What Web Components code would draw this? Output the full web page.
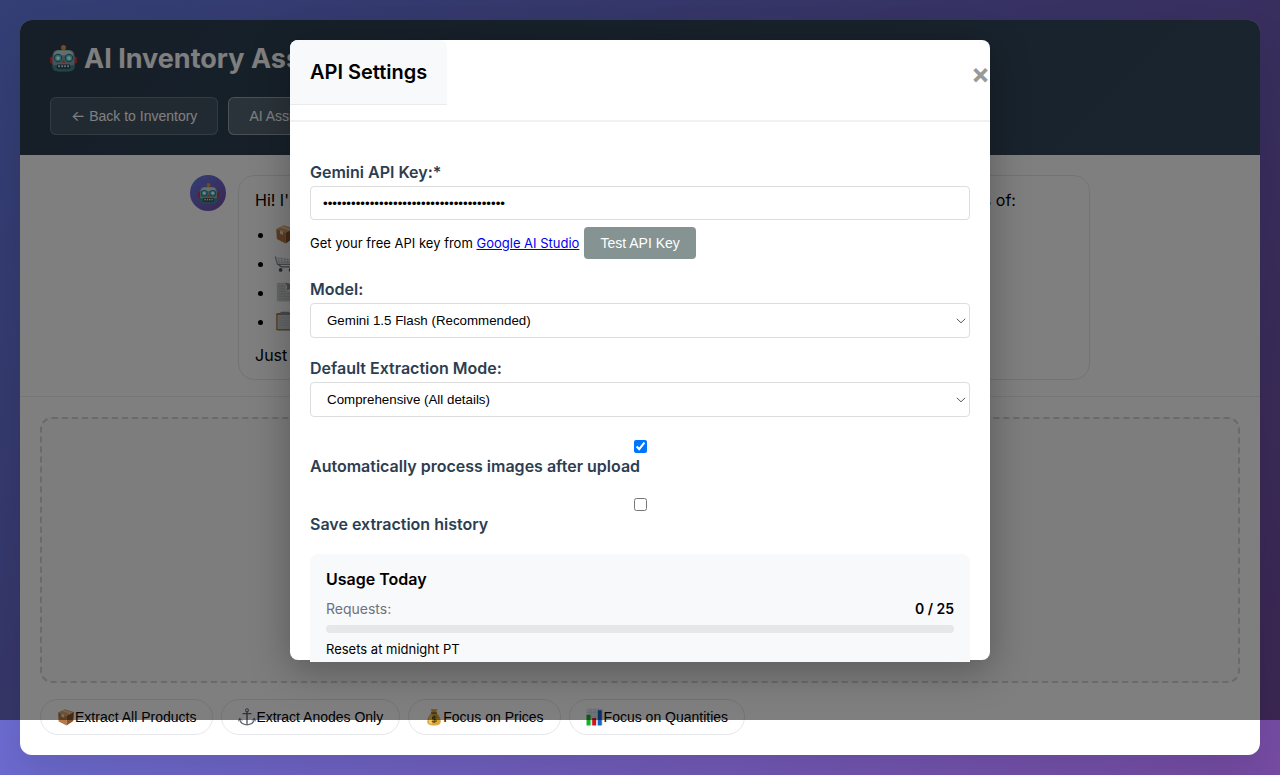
<!DOCTYPE html>
<html lang="en">
<head>
<meta charset="utf-8">
<meta name="viewport" content="width=device-width, initial-scale=1">
<title>AI Inventory Assistant</title>
<style>
  * { box-sizing: border-box; }
  body {
    margin: 0;
    font-family: Inter, "Liberation Sans", sans-serif;
    font-size: 16px;
    line-height: 24px;
    color: #000;
  }
</style>
</head>
<body>
<inventory-app></inventory-app>

<script>
const ICONS = {
  robot: `
    <rect x="0" y="14" width="4" height="8" rx="1.5" fill="#c23d3a"/>
    <rect x="28" y="14" width="4" height="8" rx="1.5" fill="#c23d3a"/>
    <rect x="14" y="4" width="4" height="4" fill="#8e6a8c"/>
    <circle cx="16" cy="3" r="3" fill="#e09c2c"/>
    <path d="M10 6h12c5 0 7 3 7 8v11c0 4-2 6-6 6H9c-4 0-6-2-6-6V14c0-5 2-8 7-8z" fill="#8aa9ae"/>
    <path d="M11 6.500h10c4 0 6 2 6.500 5.500h-23c.5-3.500 2.500-5.500 6.500-5.500z" fill="#c6dcdc"/>
    <path d="M3 23v2c0 4 2 6 6 6h14c4 0 6-2 6-6v-2c-3 2-23 2-26 0z" fill="#3e8890"/>
    <circle cx="9.500" cy="15.500" r="5" fill="#1d7488"/><circle cx="22.500" cy="15.500" r="5" fill="#1d7488"/>
    <circle cx="9.500" cy="15.500" r="3.800" fill="#4fcde0"/><circle cx="22.500" cy="15.500" r="3.800" fill="#4fcde0"/>
    <circle cx="9.500" cy="15.500" r="2.200" fill="#fff"/><circle cx="22.500" cy="15.500" r="2.200" fill="#fff"/>
    <path d="M16 17l2.500 4h-5z" fill="#e2503f"/>
    <rect x="8" y="23" width="16" height="5" rx="1.5" fill="#243f4a"/>
    <path d="M9.500 24H12v2.500H9.500zM13.300 24h2.300v2.500h-2.300zM16.700 24H19v2.500h-2.300zM20.200 24h2.300v2.500h-2.300z" fill="#cfdcdb"/>`,
  box: `
    <path d="M2 8L14 2l16 5-13 7z" fill="#d9a066"/>
    <path d="M2 8l15 6v17L3 24z" fill="#b87a42"/>
    <path d="M17 14l13-7-1 16-12 8z" fill="#8a5528"/>
    <path d="M8 5l4-2 15 5.500-4 2.200z" fill="#edcda0"/>
    <path d="M8 10.400l5 2v5l-5-2z" fill="#f3e3c8"/>`,
  cart: `
    <path d="M0 5l4 13h20l5-6h3" fill="none" stroke="#8d9297" stroke-width="2"/>
    <path d="M1 8l26 3M2 12l24 2M3 15h22M5 7l3 11M10 7l2 11M15 8l1 10M20 9v9M25 10l-1 8" stroke="#c4c8cb" stroke-width="1.500"/>
    <path d="M5 18l5 4h18" fill="none" stroke="#777c81" stroke-width="2"/>
    <circle cx="9" cy="27" r="3" fill="#555"/><circle cx="25" cy="27" r="3" fill="#555"/>`,
  page: `
    <path d="M3 1h14l2 12 12 3v15H3z" fill="#cfd1d3"/>
    <path d="M16 1c8 0 14 5 15 14-4-3-8-4-12-2 1-4 0-9-3-12z" fill="#8f9296"/>
    <path d="M6 7h9M6 11h10M6 15h11M6 19h21M6 23h21M6 27h21" stroke="#b0b3b6" stroke-width="1"/>`,
  clipboard: `
    <rect x="2" y="3" width="28" height="28" rx="2" fill="#a8763a"/>
    <path d="M4 6h24v23H4z" fill="#cdd0d2"/>
    <path d="M7 11h18M7 15h18M7 19h18M7 23h18" stroke="#bfc3c6" stroke-width="1"/>
    <rect x="9" y="1" width="14" height="5" rx="1" fill="#8f959b"/>`,
  anchor: `
    <g fill="none" stroke="#5e6670" stroke-linecap="round">
      <circle cx="16" cy="4" r="2.500" stroke-width="1.800"/>
      <path d="M16 7v22" stroke-width="2.600"/>
      <path d="M9 10h14" stroke-width="2.200"/>
      <path d="M3 20c1 6 6 9.500 13 10 7-.5 12-4 13-10" stroke-width="2.400"/>
      <path d="M1 23l2-5 4 4M31 23l-2-5-4 4" stroke-width="1.600"/>
    </g>`,
  money: `
    <path d="M10 2c2 1 4-1 6 0s4-1 6 0l-2.500 6h-7z" fill="#dcae3c"/>
    <path d="M12 9h8c5 4 8 10 8 15 0 5-4 7-12 7S4 29 4 24C4 19 7 13 12 9z" fill="#d9aa3a"/>
    <path d="M7 19c1-4 3-7 6-9l-1 19c-5-1-6-5-5-10z" fill="#f0cc6b"/>
    <rect x="10.500" y="7.500" width="11" height="2.500" rx="1" fill="#8b5a1a"/>
    <path d="M20 17c-1-1.700-7-2.300-7 .8 0 3.200 7 1.400 7 4.700 0 3.100-6.500 2.800-7.500.5M16.300 13.500v13" fill="none" stroke="#5d430f" stroke-width="1.900"/>`,
  chart: `
    <path d="M1 1h29v30H1z" fill="#dfe9f1"/>
    <path d="M1 8h29M1 15h29M1 22h29M9 1v30M16 1v30M22 1v30" stroke="#c6d3df" stroke-width="1"/>
    <path d="M1 12h7v19H1z" fill="#12b422"/>
    <path d="M11 18h7v13h-7z" fill="#d4141c"/>
    <path d="M21 4h7v27h-7z" fill="#1763c6"/>`
};

function define(name, render) {
  customElements.define(name, class extends HTMLElement {
    connectedCallback() {
      if (this.shadowRoot) return;
      this.attachShadow({ mode: "open" }).innerHTML =
        "<style>*{box-sizing:border-box}</style>" + render(this);
    }
  });
}

define("emoji-icon", el => `
  <style>
    :host { display: inline-block; width: 1em; height: 1em; flex: none; }
    svg { display: block; width: 100%; height: 100%; }
  </style>
  <svg viewBox="0 0 32 32" aria-hidden="true">${ICONS[el.getAttribute("name")]}</svg>`);

define("nav-button", el => `
  <style>
    :host { display: block; }
    button {
      display: block; height: 38px; padding: 0 20px;
      font: 14px/20px "Liberation Sans", Arial, sans-serif; color: #fff;
      background: rgba(255,255,255,.1); border: 1px solid rgba(255,255,255,.2); border-radius: 6px;
    }
    :host([active]) button { background: rgba(255,255,255,.2); border-color: rgba(255,255,255,.4); }
  </style>
  <button type="button"><slot></slot></button>`);

define("app-header", () => `
  <style>
    :host {
      display: flex; flex-direction: column; gap: 20px; padding: 20px 30px;
      background: linear-gradient(135deg, #2c3e50, #34495e); color: #fff;
    }
    h1 { display: flex; align-items: center; gap: 7px; margin: 0; font-size: 27px; line-height: 37px; font-weight: 700; white-space: nowrap; }
    nav { display: flex; gap: 10px; }
    .arrow { font-family: Inter, sans-serif; font-size: 15px; }
  </style>
  <h1><emoji-icon name="robot"></emoji-icon>AI Inventory Assistant</h1>
  <nav>
    <nav-button><span class="arrow">←</span> Back to Inventory</nav-button>
    <nav-button active>AI Assistant</nav-button>
  </nav>`);

define("chat-message", () => `
  <style>
    :host { display: flex; align-items: flex-start; gap: 12px; width: 100%; max-width: 900px; margin: 0 auto; }
    .avatar {
      display: grid; place-items: center; width: 36px; height: 36px; flex: none; border-radius: 50%;
      font-size: 21px; background: linear-gradient(135deg, #667eea, #764ba2);
    }
    .bubble { flex: 1; min-width: 0; padding: 12px 16px; border: 1px solid #e5e7eb; border-radius: 16px; }
  </style>
  <div class="avatar"><emoji-icon name="robot"></emoji-icon></div>
  <div class="bubble"><slot></slot></div>`);

define("chat-panel", () => `
  <style>
    :host { display: block; padding: 20px 20px 16px; border-bottom: 1px solid #e9ecef; }
    p { margin: 0; white-space: nowrap; }
    ul { display: grid; gap: 5px; margin: 10px 0; padding-left: 20px; }
    li emoji-icon { font-size: 20px; vertical-align: -4px; margin-right: 4px; }
  </style>
  <chat-message>
    <p>Hi! I'm your AI inventory assistant. I can help you extract all product information from screenshots of:</p>
    <ul>
      <li><emoji-icon name="box"></emoji-icon>Products</li>
      <li><emoji-icon name="cart"></emoji-icon>Carts</li>
      <li><emoji-icon name="page"></emoji-icon>Invoices</li>
      <li><emoji-icon name="clipboard"></emoji-icon>Lists</li>
    </ul>
    <p>Just drop an image below</p>
  </chat-message>`);

define("quick-action", el => `
  <style>
    :host { display: block; }
    button {
      display: flex; align-items: center; height: 36px; padding: 0 16px;
      font: 14px/20px "Liberation Sans", Arial, sans-serif; color: #000; white-space: nowrap;
      background: #fff; border: 1px solid #e5e7eb; border-radius: 18px;
    }
    emoji-icon { font-size: 18px; }
  </style>
  <button type="button"><emoji-icon name="${el.getAttribute("icon")}"></emoji-icon><slot></slot></button>`);

define("upload-panel", () => `
  <style>
    :host { display: flex; flex-direction: column; flex: 1; gap: 16px; padding: 20px; }
    .drop { flex: 1; min-height: 200px; border: 2px dashed #ced4dc; border-radius: 12px; background: #fafafa; }
    .actions { display: flex; flex-wrap: wrap; gap: 8px; }
  </style>
  <div class="drop"></div>
  <div class="actions">
    <quick-action icon="box">Extract All Products</quick-action>
    <quick-action icon="anchor">Extract Anodes Only</quick-action>
    <quick-action icon="money">Focus on Prices</quick-action>
    <quick-action icon="chart">Focus on Quantities</quick-action>
  </div>`);

const LABEL = "label{display:block;font-size:16px;line-height:24px;font-weight:600;color:#2c3e50}";

define("key-field", () => `
  <style>
    :host { display: block; }
    ${LABEL}
    input {
      display: block; width: 100%; height: 34px; margin: 2px 0 7px; padding: 0 12px;
      font-family: "Liberation Sans", Arial, sans-serif; color: #000;
      background: #fff; border: 1px solid #ddd; border-radius: 4px; outline: 0;
    }
    .help { display: flex; align-items: center; gap: 5px; font-size: 13px; line-height: 20px; }
    a { color: #0000ee; }
    button {
      height: 32px; padding: 0 16px; border: 0; border-radius: 4px;
      font: 14px/20px "Liberation Sans", Arial, sans-serif; color: #fff; background: #859392;
    }
  </style>
  <label for="key">Gemini API Key:*</label>
  <input id="key" type="password" value="AIza-placeholder-key-0123456789-abcdefg">
  <div class="help"><span>Get your free API key from <a href="#">Google AI Studio</a></span><button type="button">Test API Key</button></div>`);

define("select-field", el => `
  <style>
    :host { display: block; }
    ${LABEL}
    .box { display: grid; align-items: center; margin-top: 2px; }
    select, svg { grid-area: 1 / 1; }
    select {
      appearance: none; width: 100%; height: 35px; padding: 0 16px;
      font-family: "Liberation Sans", Arial, sans-serif; color: #000;
      background: #fff; border: 1px solid #ddd; border-radius: 4px;
    }
    svg { justify-self: end; width: 10px; height: 6px; margin-right: 4px; pointer-events: none; }
  </style>
  <label for="choice">${el.getAttribute("label")}</label>
  <div class="box">
    <select id="choice"><option>${el.getAttribute("value")}</option></select>
    <svg viewBox="0 0 10 6" fill="none" stroke="#555" stroke-width="1" aria-hidden="true"><path d="M.8.8L5 4.800 9.200.8"/></svg>
  </div>`);

define("check-field", el => `
  <style>
    :host { display: flex; flex-direction: column; gap: 1px; padding-top: 5px; }
    ${LABEL}
    input { width: 13px; height: 13px; margin: 0; align-self: center; accent-color: #0075ff; }
  </style>
  <input id="check" type="checkbox" ${el.hasAttribute("checked") ? "checked" : ""}>
  <label for="check">${el.getAttribute("label")}</label>`);

define("usage-card", () => `
  <style>
    :host { display: block; padding: 16px; border-radius: 8px; background: #f8f9fb; }
    h4 { margin: 0 0 12px; font-size: 16px; line-height: 18px; font-weight: 600; }
    .row { display: flex; justify-content: space-between; font-size: 14px; line-height: 18px; color: #6b7280; }
    strong { font-weight: 600; color: #000; }
    .bar { height: 8px; margin: 7px 0 8px; border-radius: 4px; background: #e5e7eb; }
    small { display: block; font-size: 13px; line-height: 16px; }
  </style>
  <h4>Usage Today</h4>
  <div class="row"><span>Requests:</span><strong>0 / 25</strong></div>
  <div class="bar"></div>
  <small>Resets at midnight PT</small>`);

define("settings-modal", () => `
  <style>
    :host {
      display: flex; flex-direction: column; width: 100%; max-width: 700px;
      background: #fff; border-radius: 8px; box-shadow: 0 10px 40px rgba(0,0,0,.3);
    }
    header { display: flex; justify-content: space-between; align-items: flex-start; padding-bottom: 15px; border-bottom: 2px solid #f1f1f1; }
    h2 {
      margin: 0; padding: 20px; font-size: 20px; line-height: 24px; font-weight: 600;
      background: #f8f9fb; border-bottom: 1px solid #e9ecef; border-radius: 8px 8px 0 0;
    }
    header button {
      margin: 20px 0 0; padding: 0; border: 0; background: none;
      font: 700 28px/28px Inter, sans-serif; color: #999;
    }
    .body { flex: 1; min-height: 0; margin-bottom: -2px; overflow: hidden; padding: 38px 20px 0; }
    form { display: grid; gap: 18px; }
    .checks { display: grid; gap: 15px; }
  </style>
  <header><h2>API Settings</h2><button type="button" aria-label="Close">×</button></header>
  <div class="body">
    <form>
      <key-field></key-field>
      <select-field label="Model:" value="Gemini 1.5 Flash (Recommended)"></select-field>
      <select-field label="Default Extraction Mode:" value="Comprehensive (All details)"></select-field>
      <div class="checks">
        <check-field label="Automatically process images after upload" checked></check-field>
        <check-field label="Save extraction history"></check-field>
      </div>
      <usage-card></usage-card>
    </form>
  </div>`);

define("modal-overlay", () => `
  <style>
    :host {
      position: absolute; inset: 0 0 55px; display: flex; justify-content: center;
      padding: 40px 20px 60px; background: rgba(0,0,0,.5);
    }
  </style>
  <slot></slot>`);

define("inventory-app", () => `
  <style>
    :host {
      position: relative; display: flex; min-height: 100vh; padding: 20px;
      background: linear-gradient(135deg, #667eea, #764ba2);
    }
    main {
      display: flex; flex-direction: column; flex: 1; min-width: 0; overflow: hidden;
      background: #fff; border-radius: 12px; box-shadow: 0 20px 40px rgba(0,0,0,.1);
    }
  </style>
  <main>
    <app-header></app-header>
    <chat-panel></chat-panel>
    <upload-panel></upload-panel>
  </main>
  <modal-overlay><settings-modal></settings-modal></modal-overlay>`);
</script>
</body>
</html>
